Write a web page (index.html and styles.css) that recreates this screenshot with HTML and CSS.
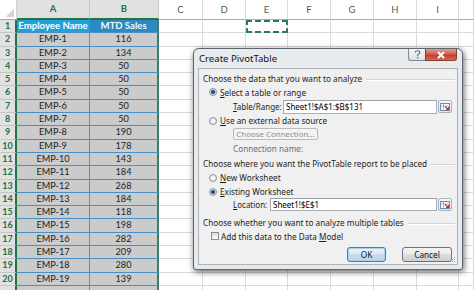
FILE: index.html
```html
<!DOCTYPE html>
<html>
<head>
<meta charset="utf-8">
<link rel="stylesheet" href="styles.css">
</head>
<body>
<div class="sheet">
  <div class="row hdr">
    <div class="corner"></div><div class="ch sel">A</div><div class="ch sel">B</div><div class="ch">C</div><div class="ch">D</div><div class="ch">E</div><div class="ch">F</div><div class="ch">G</div><div class="ch">H</div><div class="ch">I</div><div class="ch"></div>
  </div>
  <div class="row"><div class="rh">1</div><div class="c a1">Employee Name</div><div class="c b b1">MTD Sales</div><div class="e"></div><div class="e"></div><div class="e ants"></div><div class="e"></div><div class="e"></div><div class="e"></div><div class="e"></div><div class="e"></div></div>
  <div class="row"><div class="rh">2</div><div class="c">EMP-1</div><div class="c b">116</div><div class="e"></div><div class="e"></div><div class="e"></div><div class="e"></div><div class="e"></div><div class="e"></div><div class="e"></div><div class="e"></div></div>
  <div class="row"><div class="rh">3</div><div class="c">EMP-2</div><div class="c b">134</div><div class="e"></div><div class="e"></div><div class="e"></div><div class="e"></div><div class="e"></div><div class="e"></div><div class="e"></div><div class="e"></div></div>
  <div class="row"><div class="rh">4</div><div class="c">EMP-3</div><div class="c b">50</div><div class="e"></div><div class="e"></div><div class="e"></div><div class="e"></div><div class="e"></div><div class="e"></div><div class="e"></div><div class="e"></div></div>
  <div class="row"><div class="rh">5</div><div class="c">EMP-4</div><div class="c b">50</div><div class="e"></div><div class="e"></div><div class="e"></div><div class="e"></div><div class="e"></div><div class="e"></div><div class="e"></div><div class="e"></div></div>
  <div class="row"><div class="rh">6</div><div class="c">EMP-5</div><div class="c b">50</div><div class="e"></div><div class="e"></div><div class="e"></div><div class="e"></div><div class="e"></div><div class="e"></div><div class="e"></div><div class="e"></div></div>
  <div class="row"><div class="rh">7</div><div class="c">EMP-6</div><div class="c b">50</div><div class="e"></div><div class="e"></div><div class="e"></div><div class="e"></div><div class="e"></div><div class="e"></div><div class="e"></div><div class="e"></div></div>
  <div class="row"><div class="rh">8</div><div class="c">EMP-7</div><div class="c b">50</div><div class="e"></div><div class="e"></div><div class="e"></div><div class="e"></div><div class="e"></div><div class="e"></div><div class="e"></div><div class="e"></div></div>
  <div class="row"><div class="rh">9</div><div class="c">EMP-8</div><div class="c b">190</div><div class="e"></div><div class="e"></div><div class="e"></div><div class="e"></div><div class="e"></div><div class="e"></div><div class="e"></div><div class="e"></div></div>
  <div class="row"><div class="rh">10</div><div class="c">EMP-9</div><div class="c b">178</div><div class="e"></div><div class="e"></div><div class="e"></div><div class="e"></div><div class="e"></div><div class="e"></div><div class="e"></div><div class="e"></div></div>
  <div class="row"><div class="rh">11</div><div class="c">EMP-10</div><div class="c b">143</div><div class="e"></div><div class="e"></div><div class="e"></div><div class="e"></div><div class="e"></div><div class="e"></div><div class="e"></div><div class="e"></div></div>
  <div class="row"><div class="rh">12</div><div class="c">EMP-11</div><div class="c b">184</div><div class="e"></div><div class="e"></div><div class="e"></div><div class="e"></div><div class="e"></div><div class="e"></div><div class="e"></div><div class="e"></div></div>
  <div class="row"><div class="rh">13</div><div class="c">EMP-12</div><div class="c b">268</div><div class="e"></div><div class="e"></div><div class="e"></div><div class="e"></div><div class="e"></div><div class="e"></div><div class="e"></div><div class="e"></div></div>
  <div class="row"><div class="rh">14</div><div class="c">EMP-13</div><div class="c b">184</div><div class="e"></div><div class="e"></div><div class="e"></div><div class="e"></div><div class="e"></div><div class="e"></div><div class="e"></div><div class="e"></div></div>
  <div class="row"><div class="rh">15</div><div class="c">EMP-14</div><div class="c b">118</div><div class="e"></div><div class="e"></div><div class="e"></div><div class="e"></div><div class="e"></div><div class="e"></div><div class="e"></div><div class="e"></div></div>
  <div class="row"><div class="rh">16</div><div class="c">EMP-15</div><div class="c b">198</div><div class="e"></div><div class="e"></div><div class="e"></div><div class="e"></div><div class="e"></div><div class="e"></div><div class="e"></div><div class="e"></div></div>
  <div class="row"><div class="rh">17</div><div class="c">EMP-16</div><div class="c b">282</div><div class="e"></div><div class="e"></div><div class="e"></div><div class="e"></div><div class="e"></div><div class="e"></div><div class="e"></div><div class="e"></div></div>
  <div class="row"><div class="rh">18</div><div class="c">EMP-17</div><div class="c b">209</div><div class="e"></div><div class="e"></div><div class="e"></div><div class="e"></div><div class="e"></div><div class="e"></div><div class="e"></div><div class="e"></div></div>
  <div class="row"><div class="rh">19</div><div class="c">EMP-18</div><div class="c b">280</div><div class="e"></div><div class="e"></div><div class="e"></div><div class="e"></div><div class="e"></div><div class="e"></div><div class="e"></div><div class="e"></div></div>
  <div class="row"><div class="rh">20</div><div class="c">EMP-19</div><div class="c b">139</div><div class="e"></div><div class="e"></div><div class="e"></div><div class="e"></div><div class="e"></div><div class="e"></div><div class="e"></div><div class="e"></div></div>
  <div class="row"><div class="rh"></div><div class="c"></div><div class="c b"></div><div class="e"></div><div class="e"></div><div class="e"></div><div class="e"></div><div class="e"></div><div class="e"></div><div class="e"></div><div class="e"></div></div>
</div>

<div class="dialog">
  <div class="titlebar">
    <span class="title">Create PivotTable</span>
    <div class="winbtns">
      <div class="wb help"><svg width="7" height="9" viewBox="0 0 7 9"><path d="M1.2 2.6 C1.2 1.2 2.2 0.7 3.5 0.7 C4.8 0.7 5.8 1.3 5.8 2.5 C5.8 3.6 4.8 3.9 4.1 4.4 C3.7 4.7 3.6 5 3.6 5.9" fill="none" stroke="#5b6b7a" stroke-width="1.1"/><rect x="3" y="7" width="1.3" height="1.4" fill="#5b6b7a"/></svg></div>
      <div class="wb close"><svg width="10" height="8" viewBox="0 0 10 8"><path d="M2 1 L8 7 M8 1 L2 7" stroke="#fff" stroke-width="2"/></svg></div>
    </div>
  </div>
  <div class="content">
    <div class="sec">Choose the data that you want to analyze</div>
    <div class="opt r1"><span class="radio on"></span><span><u>S</u>elect a table or range</span></div>
    <div class="field f1"><span class="lbl l1"><u>T</u>able/Range:</span><span class="input">Sheet1!$A$1:$B$131</span><span class="rbtn"><svg width="10" height="8" viewBox="0 0 10 8"><rect x="0.5" y="0.5" width="9" height="7" fill="#fff" stroke="#6f8aa6"/><path d="M0.5 3 H9.5 M3.5 0.5 V7.5" stroke="#9fb4c9"/><path d="M5 3.5 L8.5 6.5 M6 6.5 H8.5 V4" stroke="#d0283a" stroke-width="1.2" fill="none"/></svg></span></div>
    <div class="opt r2"><span class="radio"></span><span><u>U</u>se an external data source</span></div>
    <div class="connrow"><span class="connbtn">Choose Connection...</span></div>
    <div class="connname">Connection name:</div>
    <div class="sec">Choose where you want the PivotTable report to be placed</div>
    <div class="opt r3"><span class="radio"></span><span><u>N</u>ew Worksheet</span></div>
    <div class="opt r4"><span class="radio on"></span><span><u>E</u>xisting Worksheet</span></div>
    <div class="field f2"><span class="lbl l2"><u>L</u>ocation:</span><span class="input">Sheet1!$E$1</span><span class="rbtn"><svg width="10" height="8" viewBox="0 0 10 8"><rect x="0.5" y="0.5" width="9" height="7" fill="#fff" stroke="#6f8aa6"/><path d="M0.5 3 H9.5 M3.5 0.5 V7.5" stroke="#9fb4c9"/><path d="M5 3.5 L8.5 6.5 M6 6.5 H8.5 V4" stroke="#d0283a" stroke-width="1.2" fill="none"/></svg></span></div>
    <div class="sec s3">Choose whether you want to analyze multiple tables</div>
    <div class="opt chk"><span class="check"></span><span>Add this data to the Data <u>M</u>odel</span></div>
    <div class="actions"><span class="btn ok">OK</span><span class="btn cancel">Cancel</span></div>
    <svg class="grip" width="6" height="6" viewBox="0 0 6 6"><rect x="4" y="0" width="1" height="1" fill="#a0a0a0"/><rect x="2" y="2" width="1" height="1" fill="#a0a0a0"/><rect x="4" y="2" width="1" height="1" fill="#a0a0a0"/><rect x="0" y="4" width="1" height="1" fill="#a0a0a0"/><rect x="2" y="4" width="1" height="1" fill="#a0a0a0"/><rect x="4" y="4" width="1" height="1" fill="#a0a0a0"/></svg>
  </div>
</div>
</body>
</html>
```

FILE: styles.css
```css
html, body {
  margin: 0;
  padding: 0;
}
body {
  width: 474px;
  height: 290px;
  overflow: hidden;
  background: #fff;
  position: relative;
  font-family: Lato, "Liberation Sans", sans-serif;
}

/* ---------- sheet ---------- */
.sheet {
  display: flex;
  flex-direction: column;
}
.row {
  display: grid;
  grid-template-columns: 17px 73px 69px 44px 43px 42px 43px 43px 43px 42px 15px;
  height: 13.3px;
  flex: none;
}
.row.hdr {
  height: 20px;
}
.row > div {
  box-sizing: border-box;
  overflow: hidden;
  white-space: nowrap;
  text-align: center;
}
.corner {
  border-right: 1px solid #d4d4d4;
  border-bottom: 1px solid #ababab;
  background: linear-gradient(to bottom right, transparent 50%, #d6d6d6 50%) no-repeat right 2px bottom 2px / 9px 9px;
}
.ch {
  background: #fff;
  color: #555;
  font-size: 9.5px;
  line-height: 19px;
  border-right: 1px solid #dadada;
  border-bottom: 1px solid #ababab;
}
.ch.sel {
  background: #e1e1e1;
  color: #217346;
  font-weight: bold;
  border-bottom: 2px solid #217346;
  border-right: 1px solid #c6c6c6;
  line-height: 18px;
}
.rh {
  background: #e1e1e1;
  color: #217346;
  font-weight: bold;
  font-size: 9px;
  line-height: 12.3px;
  border-right: 2px solid #217346;
  border-bottom: 1px solid #c6c6c6;
}
.c {
  background: #cbcbcb;
  color: #222;
  font-size: 9.2px;
  line-height: 12.3px;
  border-right: 1px solid #4a8fc6;
  border-bottom: 1px solid #4a8fc6;
}
.c.b {
  border-right: 2px solid #3b7d74;
}
.c.a1 {
  background: #1fa1dd;
  color: #fff;
  font-weight: bold;
  font-size: 9.6px;
}
.c.b1 {
  background: #2a8bc4;
  color: #f2f6f9;
  font-weight: bold;
  font-size: 9.6px;
}
.e {
  border-right: 1px solid #dadada;
  border-bottom: 1px solid #dadada;
}
.e.ants {
  outline: 2px dashed #2d7a52;
  outline-offset: -2px;
}

/* ---------- dialog ---------- */
.dialog {
  position: absolute;
  left: 193px;
  top: 48px;
  width: 270px;
  height: 222px;
  box-sizing: border-box;
  border: 1px solid #5d6670;
  border-radius: 6px 6px 3px 3px;
  background: #e8ebee;
  box-shadow: 1px 2px 6px rgba(0, 0, 0, 0.6);
  padding: 0 4px 4px 4px;
  display: flex;
  flex-direction: column;
  font-family: "Noto Sans", "Open Sans", sans-serif;
  font-size: 8.2px;
  color: #1e1e1e;
}
.titlebar {
  height: 19px;
  flex: none;
  display: flex;
  justify-content: space-between;
  align-items: flex-start;
}
.title {
  font-size: 9.6px;
  line-height: 20px;
  padding-left: 1px;
  color: #111;
}
.winbtns {
  display: flex;
  margin-right: 1px;
}
.wb {
  height: 12px;
  box-sizing: border-box;
  display: flex;
  align-items: center;
  justify-content: center;
  border: 1px solid #7d8590;
  border-top: none;
}
.wb.help {
  width: 17px;
  border-radius: 0 0 0 3px;
  border-right: none;
  background: linear-gradient(#f3f4f5, #dfe2e5);
}
.wb.close {
  width: 32px;
  border-radius: 0 0 3px 0;
  border-color: #8e3a31;
  background: linear-gradient(#e49c90, #d0604f 45%, #c1402f 55%, #cf6a55);
}
.content {
  flex: 1;
  position: relative;
  background: #f0f0f0;
  border: 1px solid #aeb3b8;
  padding: 2px 2px 0 4px;
  display: flex;
  flex-direction: column;
}
.sec {
  height: 14px;
  flex: none;
  display: flex;
  align-items: center;
  white-space: nowrap;
}
.sec::after {
  content: "";
  flex: 1;
  margin-left: 4px;
  margin-top: 3px;
  border-top: 1px solid #d5d5d5;
  border-bottom: 1px solid #fff;
}
.sec.s3 {
  margin-top: 1px;
}
.opt {
  flex: none;
  display: flex;
  align-items: center;
  gap: 3px;
  padding-left: 6px;
  height: 14px;
  white-space: nowrap;
}
.opt.r2, .opt.r4 {
  height: 13px;
}
.opt.r3 {
  height: 15px;
}
.radio {
  width: 8px;
  height: 8px;
  box-sizing: border-box;
  border-radius: 50%;
  border: 1px solid #8b9198;
  background: radial-gradient(circle, #fdfdfd 0, #dcdfe3 100%);
  flex: none;
}
.radio.on {
  background: radial-gradient(circle, #1d3c5e 0, #2f5b86 1.6px, #d4dbe3 2.4px, #eef1f4 100%);
}
.chk {
  padding-left: 8px;
  gap: 2px;
}
.check {
  width: 8px;
  height: 8px;
  box-sizing: border-box;
  border: 1px solid #8f8f8f;
  background: linear-gradient(#d9dcdf, #fbfbfb);
  flex: none;
}
.field {
  flex: none;
  display: flex;
  align-items: center;
  padding-left: 30px;
  margin-right: 3px;
  height: 15px;
  white-space: nowrap;
}
.field.f2 {
  height: 16px;
  align-items: flex-start;
}
.lbl {
  font-size: 8px;
}
.lbl.l1 {
  width: 50px;
}
.lbl.l2 {
  width: 37px;
  line-height: 13px;
}
.input {
  flex: 1;
  height: 14px;
  box-sizing: border-box;
  background: #fff;
  border: 1px solid #abadb3;
  border-top-color: #9ea1a8;
  line-height: 12px;
  padding-left: 2px;
  color: #000;
  font-size: 8px;
}
.f1 .input {
  margin-top: 1px;
}
.f2 .input {
  height: 13px;
  line-height: 11px;
}
.rbtn {
  width: 14px;
  height: 13px;
  margin-left: 1px;
  box-sizing: border-box;
  border: 1px solid #a9b3bd;
  border-radius: 2px;
  background: linear-gradient(#f6f7f8, #e1e4e8);
  display: flex;
  align-items: center;
  justify-content: center;
}
.connrow {
  flex: none;
  height: 14px;
  padding-left: 30px;
  display: flex;
  align-items: center;
}
.connbtn {
  width: 85px;
  height: 12px;
  box-sizing: border-box;
  border: 1px solid #b7bcc1;
  border-radius: 2px;
  background: #f4f4f4;
  color: #8c8c8c;
  text-align: center;
  line-height: 10px;
  font-size: 7.9px;
}
.connname {
  flex: none;
  height: 15px;
  line-height: 15px;
  padding-left: 30px;
  color: #6d6d6d;
}
.actions {
  flex: none;
  margin-top: 4px;
  height: 15px;
  display: flex;
  justify-content: flex-end;
  gap: 16px;
  padding-right: 3px;
}
.btn {
  height: 15px;
  box-sizing: border-box;
  border-radius: 3px;
  text-align: center;
  line-height: 13px;
  color: #111;
}
.btn.ok {
  width: 39px;
  border: 1px solid #3c7fb1;
  background: linear-gradient(#eaf3f9, #dbe8f1 50%, #c9dceb 50%, #bcd4e6);
  box-shadow: inset 0 0 0 1px #a8d3ef;
}
.btn.cancel {
  width: 50px;
  border: 1px solid #707070;
  background: linear-gradient(#f3f3f3, #ebebeb 50%, #dddddd 50%, #cfcfcf);
}
.grip {
  position: absolute;
  right: 1px;
  bottom: 1px;
}
```
